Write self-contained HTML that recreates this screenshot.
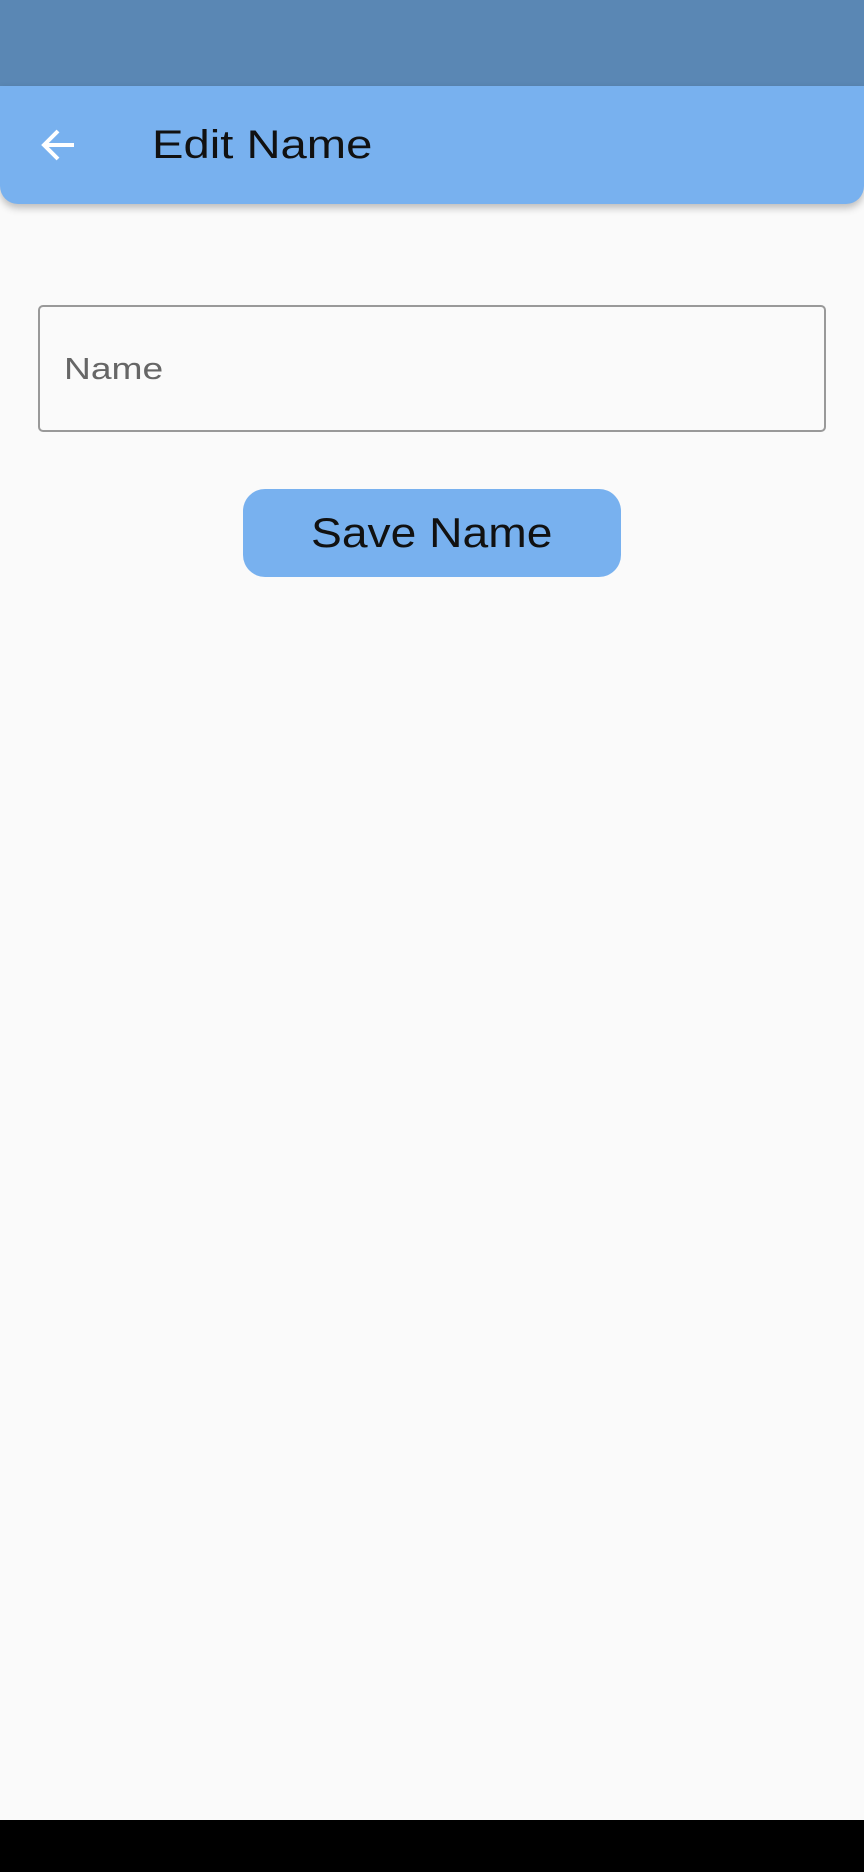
<!DOCTYPE html>
<html><head><style>
body{margin:0;width:864px;height:1872px;background:#fafafa;position:relative;overflow:hidden;font-family:"Liberation Sans",sans-serif}
.sb{position:absolute;left:0;top:0;width:864px;height:86px;background:#5a87b4}
.ab{position:absolute;left:0;top:86px;width:864px;height:118px;background:#78b1ef;border-radius:0 0 18px 18px;box-shadow:0 4px 8px rgba(0,0,0,.25)}
.t{position:absolute;left:152px;top:0;line-height:118px;font-size:40px;color:#111;transform:scaleX(1.18);transform-origin:left center}
.tf{position:absolute;left:38px;top:305px;width:784px;height:123px;border:2px solid #999;border-radius:5px;box-sizing:content-box}
.tf span{position:absolute;left:24px;top:0;line-height:123px;font-size:31px;color:#666;transform:scaleX(1.2);transform-origin:left center}
.btn{position:absolute;left:243px;top:489px;width:378px;height:88px;background:#78b1ef;border-radius:22px;text-align:center;line-height:88px;font-size:42px;color:#111}
.btn span{display:inline-block;transform:scaleX(1.1)}
.nb{position:absolute;left:0;top:1820px;width:864px;height:52px;background:#000}
</style></head><body>
<div class="sb"></div>
<div class="ab">
<svg style="position:absolute;left:40px;top:42px" width="36" height="34" viewBox="0 0 36 34"><path d="M34 17H4M18 3L4 17L18 31" fill="none" stroke="#fff" stroke-width="4"/></svg>
<div class="t">Edit Name</div></div>
<div class="tf"><span>Name</span></div>
<div class="btn"><span>Save Name</span></div>
<div class="nb"></div>
</body></html>
